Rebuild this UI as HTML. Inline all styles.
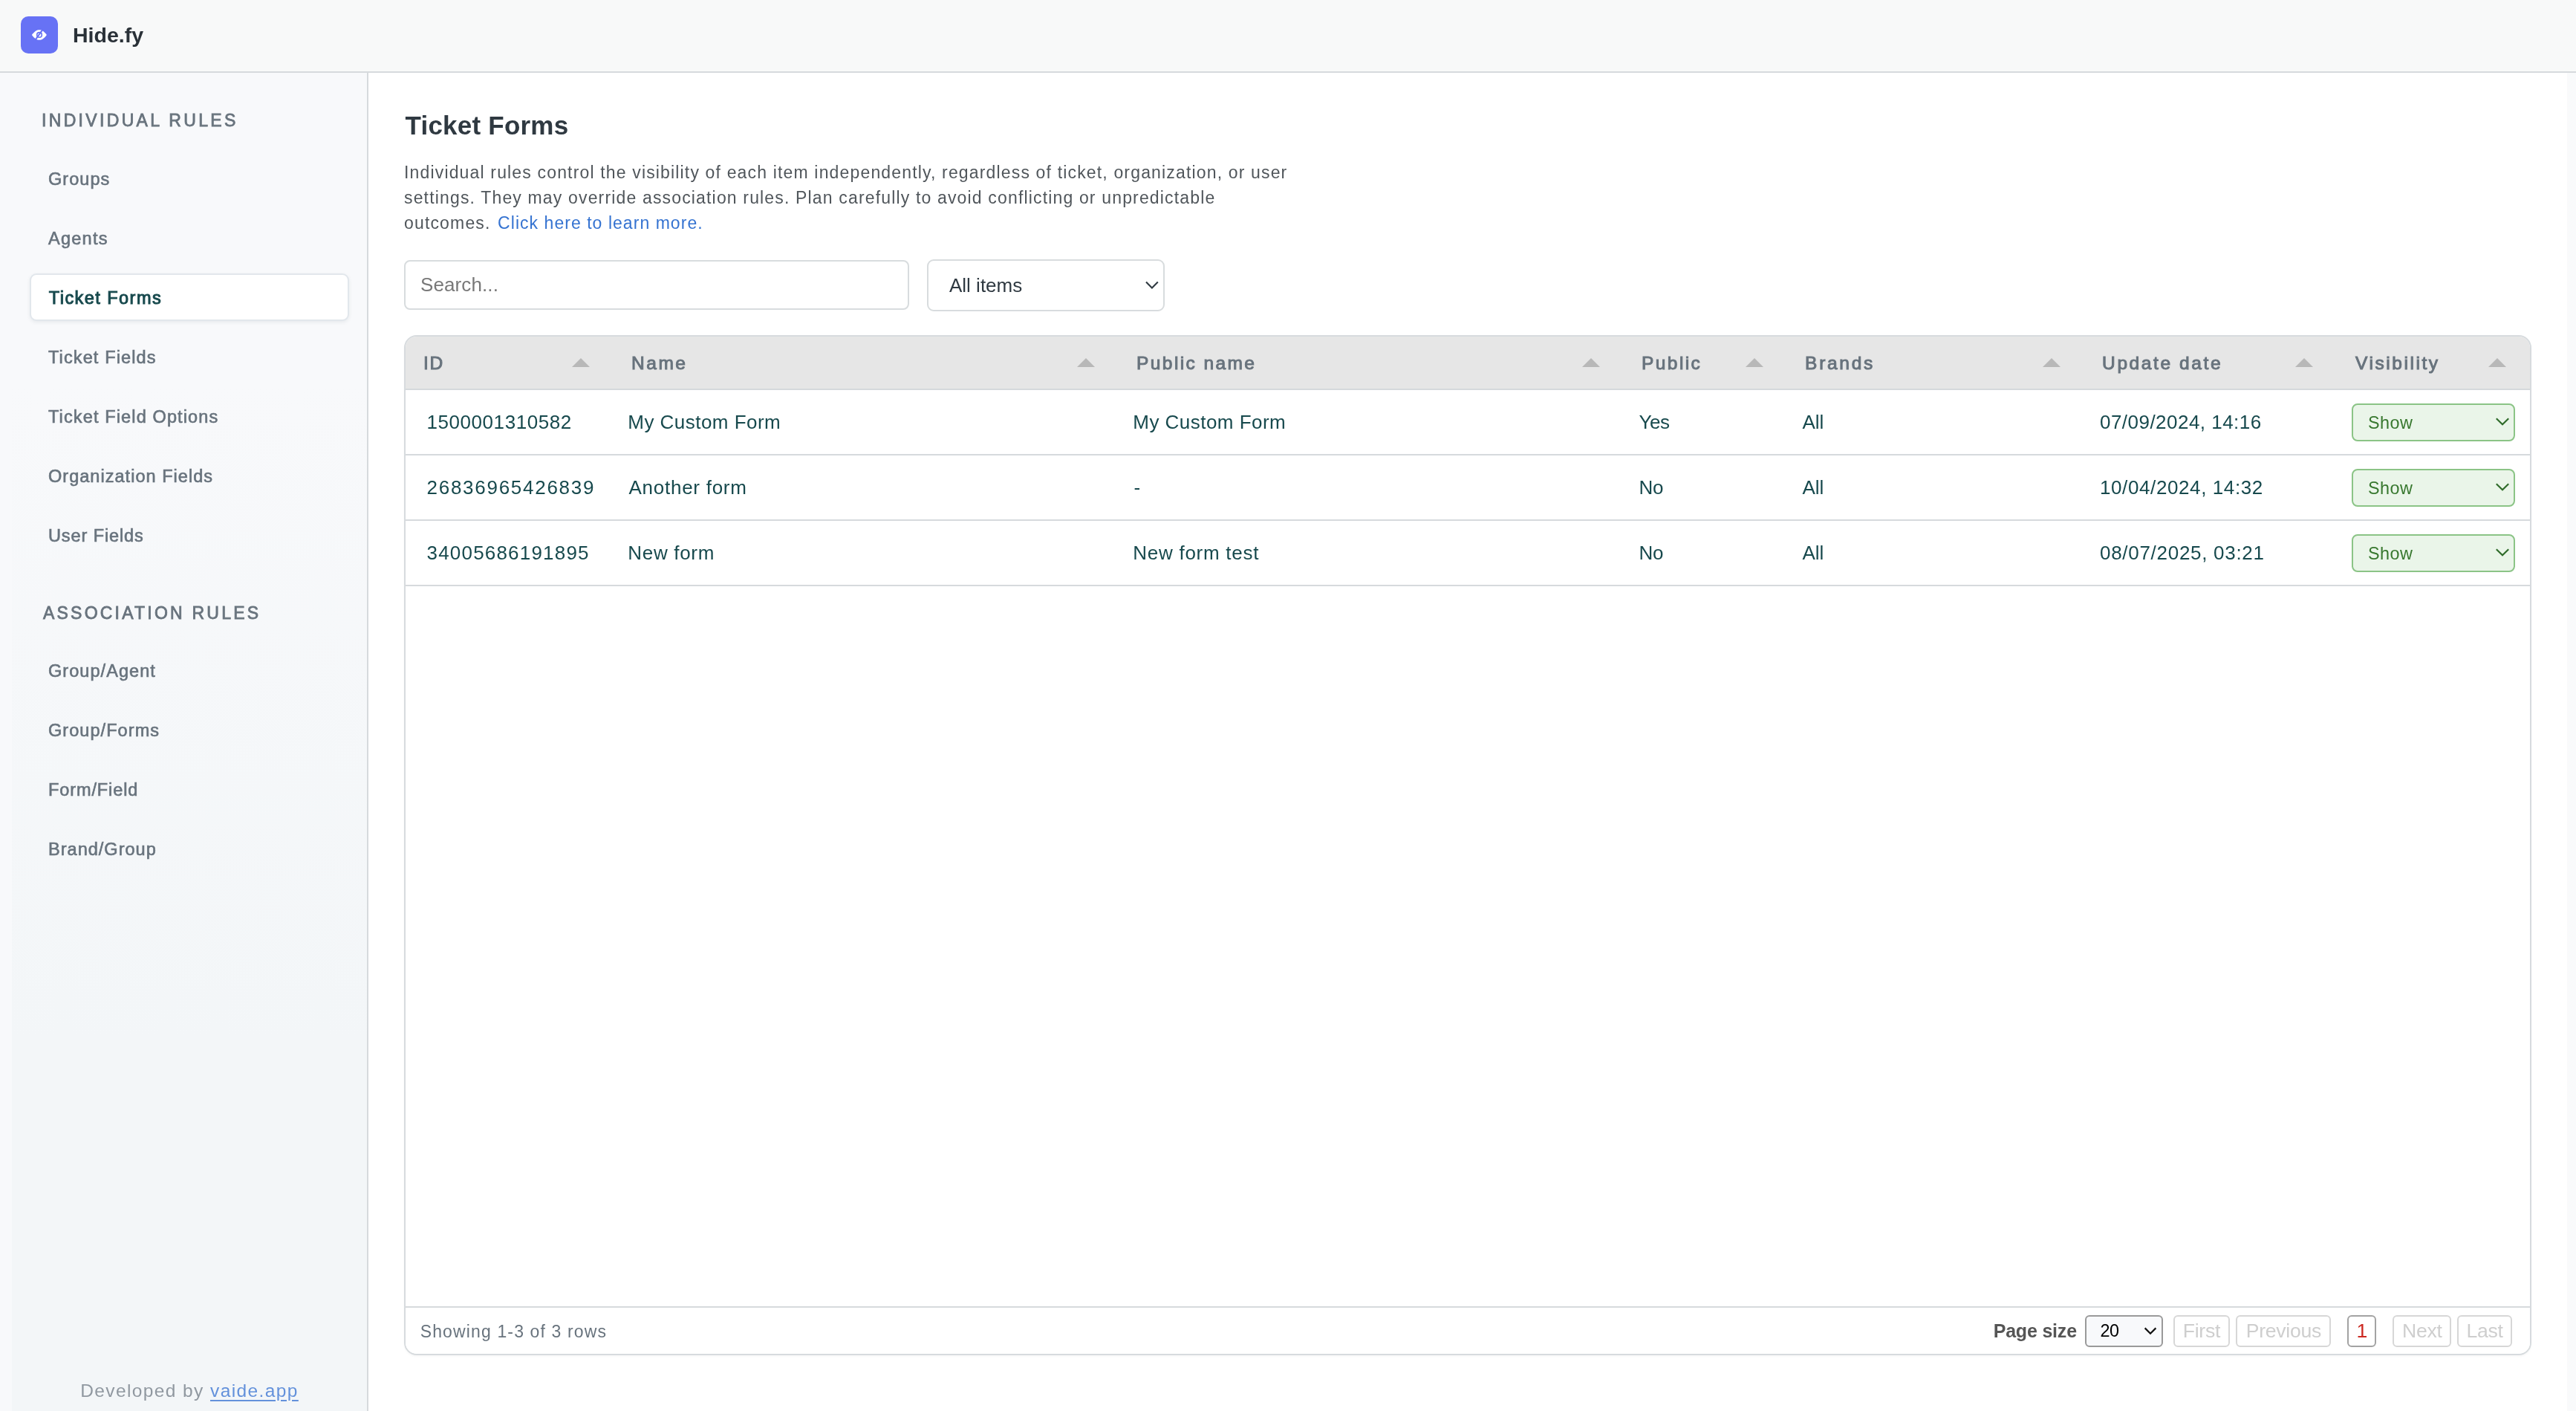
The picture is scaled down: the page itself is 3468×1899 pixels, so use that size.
<!DOCTYPE html>
<html lang="en">
<head>
<meta charset="utf-8">
<title>Hide.fy - Ticket Forms</title>
<style>
*{box-sizing:border-box;margin:0;padding:0}
html,body{width:3468px;height:1899px;overflow:hidden;background:#fff}
body{will-change:transform;font-family:"Liberation Sans",sans-serif;position:relative;color:#2f3941}
a{text-decoration:none;color:inherit}
.abs{position:absolute;white-space:nowrap;line-height:1}

/* ---------- top bar ---------- */
header{position:absolute;left:0;top:0;width:3468px;height:98px;background:#f8f9f9;border-bottom:2px solid #d6dadd}
.logo{position:absolute;left:28px;top:22px;width:50px;height:50px;border-radius:10px;background:#6772f5}
.logo svg{position:absolute;left:0;top:0}
.brand{left:98px;top:33px;font-size:28.5px;font-weight:700;letter-spacing:0;color:#2a3138}

/* ---------- sidebar ---------- */
aside{position:absolute;left:0;top:98px;width:496px;height:1801px;background:#f8f9fb;border-right:2px solid #d6dadd}
aside .shade{position:absolute;left:16px;top:0;width:478px;height:1801px;background:linear-gradient(to bottom,rgba(243,246,248,0) 0,rgba(243,246,248,0) 420px,#f3f6f8 1300px,#f3f6f8 100%)}
.navhead{left:56px;font-size:23px;letter-spacing:3.33px;color:#68737d;-webkit-text-stroke:.8px #68737d}
.nav{left:65px;font-size:23.5px;letter-spacing:1.1px;color:#68737d;-webkit-text-stroke:.65px #68737d}
.navactive{position:absolute;left:40px;top:368px;width:430px;height:64px;background:#fff;border:2px solid #e2e7ec;border-radius:9px;box-shadow:0 2px 5px rgba(40,60,80,.08)}
.nav.on{left:65.8px;font-size:23.5px;font-weight:400;letter-spacing:1.45px;color:#17494d;-webkit-text-stroke:1px #17494d}
.dev{position:absolute;left:16px;width:478px;top:1860.1px;text-align:center;font-size:24.5px;line-height:1;letter-spacing:1.4px;color:#9098a0;white-space:nowrap}
.dev a{color:#6391db;text-decoration:underline;text-decoration-thickness:2px;text-underline-offset:4px}

/* ---------- main ---------- */
h1{left:545.5px;top:150.9px;font-size:35px;font-weight:700;letter-spacing:.22px;color:#2f3941}
.desc{position:absolute;left:544px;top:216.2px;font-size:23px;line-height:33.7px;letter-spacing:1.16px;color:#50565b;white-space:nowrap}
.desc a{color:#3573d1;letter-spacing:1.04px;margin-left:2px}
.search{position:absolute;left:544px;top:350px;width:680px;height:67px;border:2px solid #d8dcde;border-radius:8px;background:#fff}
.search span{left:20px;top:17.7px;font-size:26px;letter-spacing:.1px;color:#787878}
.filter{position:absolute;left:1248px;top:349px;width:320px;height:70px;border:2px solid #d8dcde;border-radius:9px;background:#fff}
.filter span{left:28px;top:20.2px;font-size:26px;color:#2f3941}
.filter svg{position:absolute;left:291px;top:26px}

/* ---------- table ---------- */
.tablewrap{position:absolute;left:544px;top:451px;width:2864px;height:1373px;border:2px solid #d7dbde;border-radius:17px;background:#fff;overflow:hidden;box-shadow:0 2px 3px rgba(0,0,0,.03)}

table{border-collapse:separate;border-spacing:0;table-layout:fixed;width:2860px}
th{position:relative;height:72px;background:#e6e6e6;border-bottom:2px solid #d5d9dc;text-align:left;vertical-align:middle;padding:3px 0 0 24.1px;font-size:24.5px;line-height:1;font-weight:400;letter-spacing:2.4px;-webkit-text-stroke:1px #68737d;color:#68737d;white-space:nowrap}
th i{position:absolute;right:32px;top:29px;width:0;height:0;border-left:12px solid transparent;border-right:12px solid transparent;border-bottom:12px solid #b8b8b8}
td{height:88px;border-bottom:2px solid #d6dadd;vertical-align:middle;padding:0 0 0 20.5px;font-size:26px;line-height:1;color:#17494d;letter-spacing:.47px;white-space:nowrap}
td.id{padding-left:28.5px}
td.dt{padding-left:21px}
td.v{padding-left:20px}
td.m{padding-left:19.3px}
.vis{position:relative;width:220px;height:51px;border:2px solid #8bc486;border-radius:8px;background:#eaf5e9}
.vis span{left:20px;top:13.4px;font-size:23.4px;color:#38782f}
.vis svg{position:absolute;left:191px;top:16px}
.tfoot{position:absolute;left:0;top:1305px;width:2860px;height:64px;border-top:2px solid #d6dadd;background:#fff}
.showing{left:19.7px;top:20.9px;font-size:23px;letter-spacing:1.14px;color:#68737d}
.pgsize{left:2137.7px;top:18.6px;font-size:25px;font-weight:700;letter-spacing:-.2px;color:#555}
.pgsel{position:absolute;left:2261.4px;top:10.4px;width:104.2px;height:42.6px;border:2px solid #9a9a9a;border-radius:6px;background:#f8f9fb}
.pgsel span{left:18px;top:8px;font-size:23.4px;letter-spacing:-.4px;color:#000}
.pgsel svg{position:absolute;left:76px;top:13px}
.pg{position:absolute;top:10.4px;height:42.6px;border:2px solid #d7d7d7;border-radius:6px;font-size:26.6px;letter-spacing:-.25px;line-height:38px;text-align:center;color:#cecece;white-space:nowrap;background:#fff}
.pg.cur{border-color:#a3a3a3;color:#cc2a22}
</style>
</head>
<body>

<header>
  <div class="logo">
    <svg width="50" height="50" viewBox="0 0 50 50">
      <path d="M14.9 25C18.5 20 21.5 18.2 24.9 18.2C28.3 18.2 31.3 20 34.9 25C31.3 30 28.3 31.8 24.9 31.8C21.5 31.8 18.5 30 14.9 25Z" fill="#fff"/>
      <circle cx="25" cy="24.9" r="3.3" fill="none" stroke="#6772f5" stroke-width="1.6"/>
      <line x1="29.8" y1="17.4" x2="19.4" y2="31.8" stroke="#6772f5" stroke-width="2"/>
    </svg>
  </div>
  <div class="abs brand">Hide.fy</div>
</header>

<aside>
  <div class="shade"></div>
  <nav style="position:absolute;left:0;top:-98px">
    <div class="abs navhead" style="top:151.3px">INDIVIDUAL RULES</div>
    <a class="abs nav" style="top:230.1px;letter-spacing:1.05px">Groups</a>
    <a class="abs nav" style="top:309.9px;letter-spacing:1.25px">Agents</a>
    <div class="navactive"></div>
    <a class="abs nav on" style="top:389.8px">Ticket Forms</a>
    <a class="abs nav" style="top:469.9px;letter-spacing:1.12px">Ticket Fields</a>
    <a class="abs nav" style="top:549.9px;letter-spacing:1.13px">Ticket Field Options</a>
    <a class="abs nav" style="top:629.9px;letter-spacing:1.03px">Organization Fields</a>
    <a class="abs nav" style="top:709.9px;letter-spacing:.9px">User Fields</a>
    <div class="abs navhead" style="top:813.5px;left:58px;letter-spacing:3.22px">ASSOCIATION RULES</div>
    <a class="abs nav" style="top:891.9px;letter-spacing:1.06px">Group/Agent</a>
    <a class="abs nav" style="top:971.9px;letter-spacing:1.06px">Group/Forms</a>
    <a class="abs nav" style="top:1051.9px;letter-spacing:.9px">Form/Field</a>
    <a class="abs nav" style="top:1131.9px;letter-spacing:1.02px">Brand/Group</a>
    <div class="dev">Developed by <a>vaide.app</a></div>
  </nav>
</aside>

<div style="position:absolute;left:3456px;top:98px;width:12px;height:1801px;background:#f9fafb"></div>

<main>
  <h1 class="abs">Ticket Forms</h1>
  <p class="desc">Individual rules control the visibility of each item independently, regardless of ticket, organization, or user<br>settings. They may override association rules. Plan carefully to avoid conflicting or unpredictable<br>outcomes. <a>Click here to learn more.</a></p>

  <div class="search"><span class="abs">Search...</span></div>
  <div class="filter"><span class="abs">All items</span>
    <svg width="20" height="14" viewBox="0 0 20 14"><polyline points="2,2.6 9.9,10.6 17.8,2.6" fill="none" stroke="#2f3941" stroke-width="2.1"/></svg>
  </div>

  <div class="tablewrap">
    <table>
      <thead><tr><th style="width:280px;letter-spacing:1.6px">ID<i></i></th><th style="width:680px;letter-spacing:2.5px">Name<i></i></th><th style="width:680px;letter-spacing:2.4px">Public name<i></i></th><th style="width:220px">Public<i></i></th><th style="width:400px;letter-spacing:2.7px">Brands<i></i></th><th style="width:340px;letter-spacing:2.6px">Update date<i></i></th><th style="width:260px;padding-left:25px;letter-spacing:2.55px">Visibility<i></i></th></tr></thead>
      <tbody>
      <tr><td class="id" style="letter-spacing:.56px">1500001310582</td><td class="m">My Custom Form</td><td class="m">My Custom Form</td><td style="letter-spacing:-.5px">Yes</td><td style="letter-spacing:0">All</td><td class="dt">07/09/2024, 14:16</td><td class="v"><div class="vis"><span class="abs">Show</span><svg width="20" height="14" viewBox="0 0 20 14"><polyline points="1.8,2.2 10,10.2 18.2,2.2" fill="none" stroke="#2f6b2a" stroke-width="2.2"/></svg></div></td></tr>
      <tr><td class="id" style="letter-spacing:1.73px">26836965426839</td><td style="letter-spacing:.74px">Another form</td><td>-</td><td style="letter-spacing:-.2px">No</td><td style="letter-spacing:0">All</td><td class="dt" style="letter-spacing:.6px">10/04/2024, 14:32</td><td class="v"><div class="vis"><span class="abs">Show</span><svg width="20" height="14" viewBox="0 0 20 14"><polyline points="1.8,2.2 10,10.2 18.2,2.2" fill="none" stroke="#2f6b2a" stroke-width="2.2"/></svg></div></td></tr>
      <tr><td class="id" style="letter-spacing:1.2px">34005686191895</td><td class="m" style="letter-spacing:.68px">New form</td><td class="m" style="letter-spacing:.73px">New form test</td><td style="letter-spacing:-.2px">No</td><td style="letter-spacing:0">All</td><td class="dt" style="letter-spacing:.71px">08/07/2025, 03:21</td><td class="v"><div class="vis"><span class="abs">Show</span><svg width="20" height="14" viewBox="0 0 20 14"><polyline points="1.8,2.2 10,10.2 18.2,2.2" fill="none" stroke="#2f6b2a" stroke-width="2.2"/></svg></div></td></tr>
      </tbody>
    </table>
    <div class="tfoot">
      <div class="abs showing">Showing 1-3 of 3 rows</div>
      <div class="abs pgsize">Page size</div>
      <div class="pgsel"><span class="abs">20</span><svg width="20" height="14" viewBox="0 0 20 14"><polyline points="2.65,2.4 10,9.7 17.35,2.4" fill="none" stroke="#111" stroke-width="2.2"/></svg></div>
      <div class="pg" style="left:2380.3px;width:75.3px">First</div>
      <div class="pg" style="left:2464.4px;width:128px">Previous</div>
      <div class="pg cur" style="left:2614.4px;width:39px">1</div>
      <div class="pg" style="left:2675.4px;width:79px">Next</div>
      <div class="pg" style="left:2762.3px;width:73.5px">Last</div>
    </div>
  </div>
</main>

</body>
</html>
